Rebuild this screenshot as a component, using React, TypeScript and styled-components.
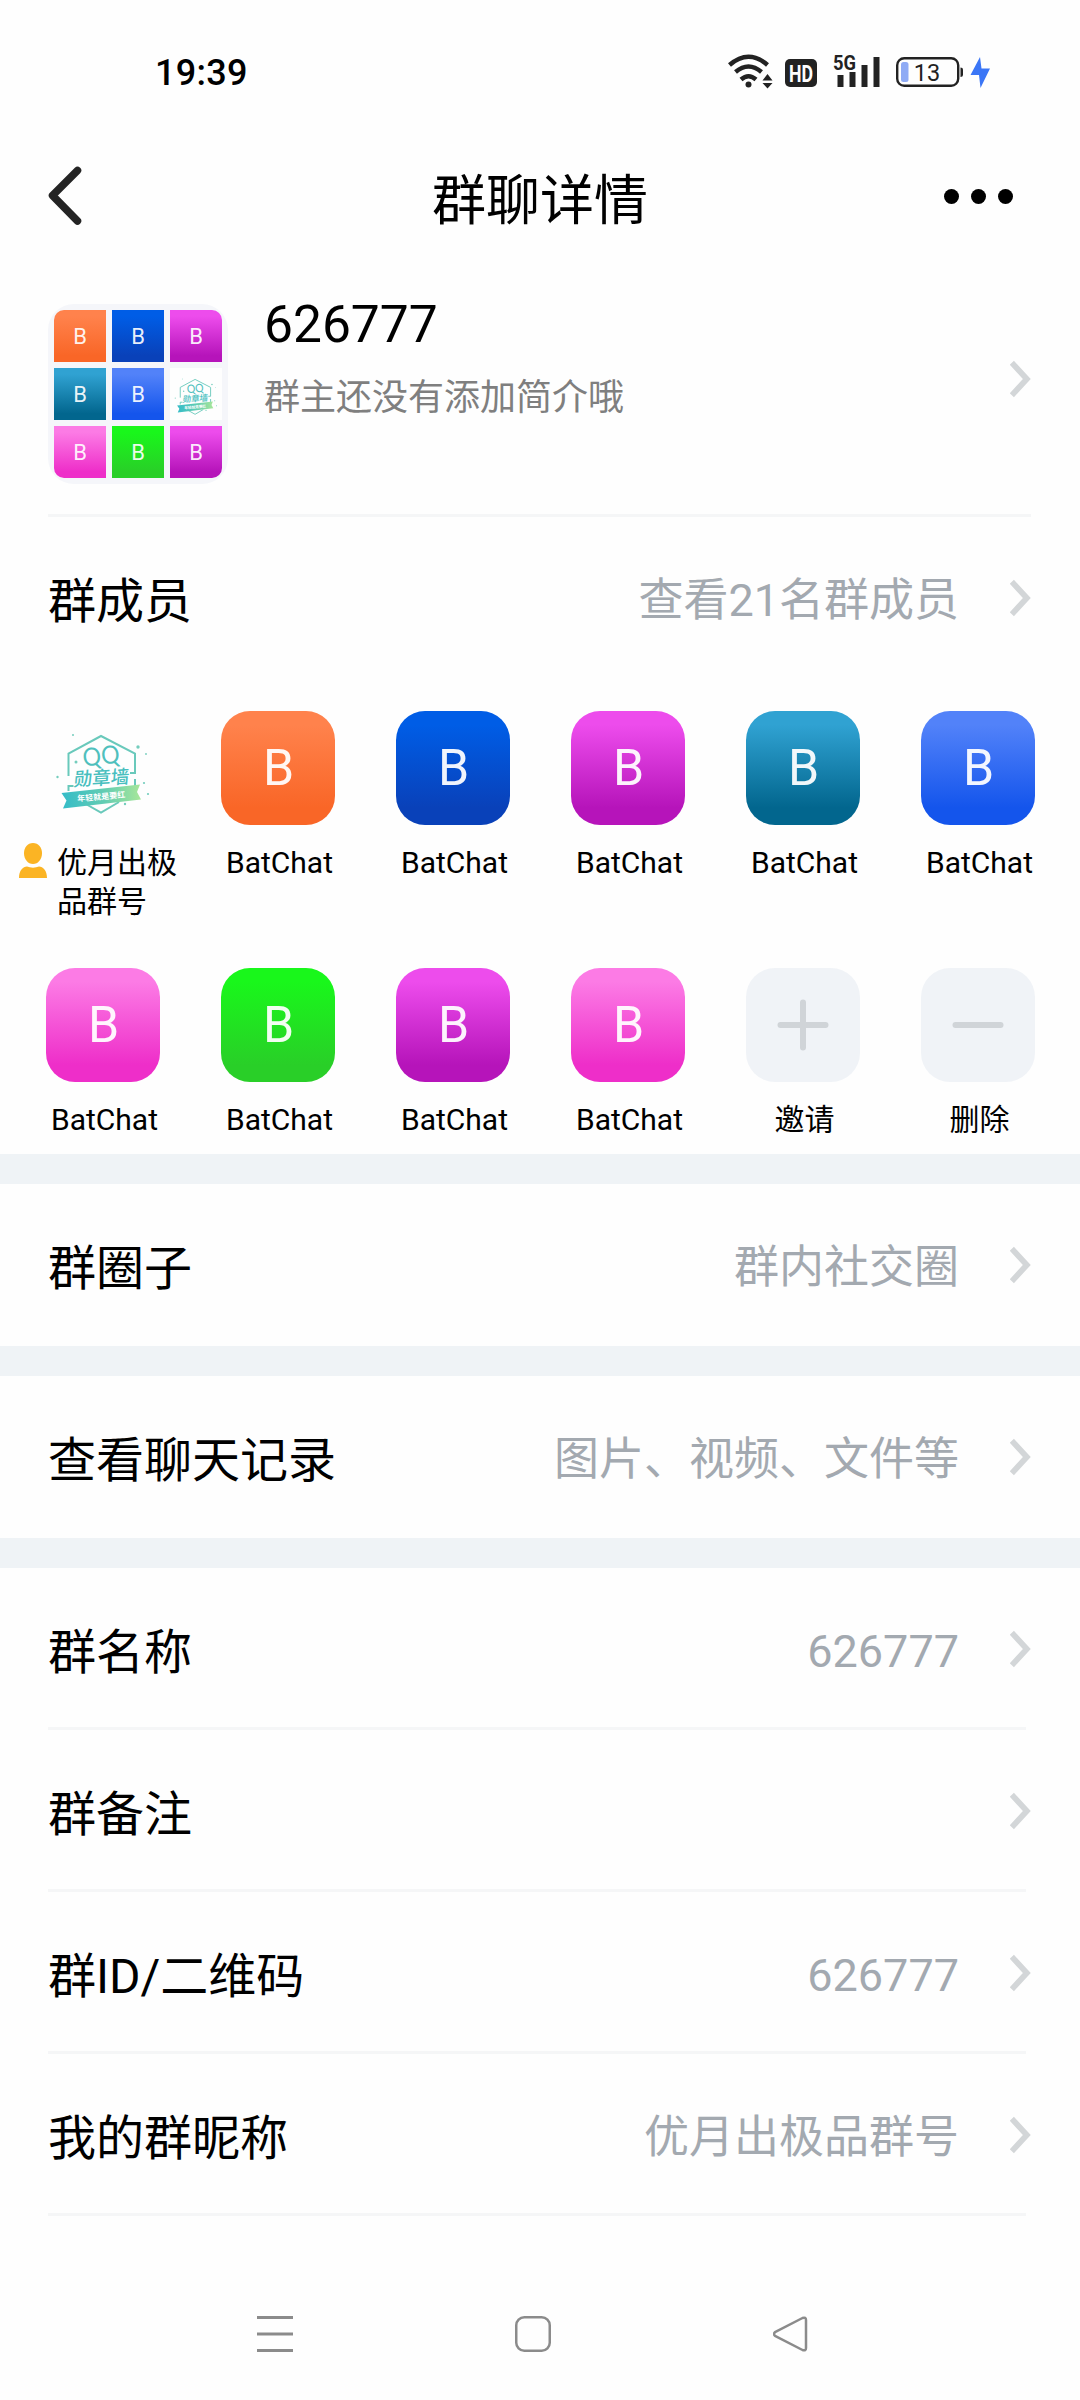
import React from "react";
import styled, { createGlobalStyle } from "styled-components";

const Global = createGlobalStyle`
  * { box-sizing: border-box; }
  body {
    margin: 0;
    background: #fefefe;
    font-family: Roboto, "Noto Sans CJK SC", sans-serif;
    color: #000;
  }
  svg { display: block; flex: none; }
`;

const Screen = styled.div`
  width: 1080px;
  height: 2400px;
  display: flex;
  flex-direction: column;
  overflow: hidden;
  background: #fefefe;
`;

const StatusBar = styled.header`
  display: flex;
  align-items: center;
  justify-content: space-between;
  height: 144px;
  padding: 0 88px 0 155px;
`;

const Clock = styled.span`
  padding-top: 2px;
  font-size: 36px;
  font-weight: 500;
  line-height: 44px;
  letter-spacing: 0.3px;
`;

const TitleBar = styled.nav`
  display: grid;
  grid-template-columns: 60px 1fr 60px;
  align-items: center;
  height: 104px;
  padding: 0 48px;
`;

const Title = styled.h1`
  margin: 0;
  padding-top: 11px;
  text-align: center;
  font-size: 54px;
  font-weight: 400;
  line-height: 64px;
`;

const Dots = styled.div`
  display: flex;
  justify-content: flex-end;
  gap: 12px;
  padding-right: 19px;
`;

const Dot = styled.i`
  width: 15px;
  height: 15px;
  flex: none;
  border-radius: 50%;
  background: #000;
`;

const GroupCard = styled.section`
  display: flex;
  align-items: flex-start;
  height: 269px;
  margin: 0 49px 0 48px;
  padding-top: 56px;
  border-bottom: 3px solid #f5f6f7;
`;

const Mosaic = styled.div`
  display: grid;
  grid-template-columns: repeat(3, 52px);
  grid-template-rows: repeat(3, 52px);
  gap: 6px;
  width: 180px;
  height: 180px;
  padding: 6px;
  border-radius: 26px;
  background: #f5f6fa;
  flex: none;
`;

const Tile = styled.div<{ $from: string; $to: string; $corner?: string }>`
  display: flex;
  align-items: center;
  justify-content: center;
  border-radius: ${(p) => p.$corner ?? "0"};
  background: linear-gradient(${(p) => p.$from} 12%, ${(p) => p.$to} 88%);
  color: rgba(255, 255, 255, 0.92);
  font-size: 22px;
`;

const GroupText = styled.div`
  flex: 1;
  padding-left: 36px;
`;

const GroupName = styled.div`
  margin-top: -10px;
  font-size: 51.5px;
  line-height: 62px;
`;

const GroupIntro = styled.div`
  margin-top: 18px;
  font-size: 36px;
  line-height: 48px;
  color: #7f7f7f;
`;

const GroupArrow = styled.div`
  padding: 56px 0 0;
`;

const Row = styled.div<{ $line?: boolean }>`
  display: flex;
  align-items: center;
  height: 162px;
  padding: 0 49px 0 48px;
  background: linear-gradient(#f5f6f7, #f5f6f7) 48px 100% / 978px
    ${(p) => (p.$line ? "3px" : "0")} no-repeat;
`;

const RowLabel = styled.span`
  flex: 1;
  padding-top: 8px;
  font-size: 48px;
  line-height: 60px;
`;

const RowValue = styled.span`
  margin-right: 51px;
  padding-top: 5px;
  font-size: 45px;
  line-height: 56px;
  color: #a3a9b0;
`;

const MemberGrid = styled.section`
  display: grid;
  grid-template-columns: repeat(6, 175px);
  grid-template-rows: 257px 186px;
  padding: 32px 0 0 15px;
`;

const Member = styled.div`
  display: flex;
  flex-direction: column;
  align-items: center;
`;

const Avatar = styled.div<{ $from: string; $to: string; $letter?: boolean }>`
  display: flex;
  align-items: center;
  justify-content: center;
  width: 114px;
  height: 114px;
  border-radius: 29px;
  background: linear-gradient(${(p) => p.$from} 12%, ${(p) => p.$to} 85%);
  color: rgba(255, 255, 255, 0.94);
  font-size: 50px;
  line-height: 114px;
  padding-left: ${(p) => (p.$letter ? "2px" : "0")};
`;

const MemberName = styled.div`
  padding: 18px 0 0 4px;
  font-size: 30px;
  line-height: 39px;
  text-align: center;
`;

const OwnerName = styled.div`
  display: flex;
  align-items: flex-start;
  gap: 10px;
  width: 175px;
  padding: 18px 0 0 4px;
  font-size: 30px;
  line-height: 39px;
`;

const Band = styled.div`
  height: 30px;
  flex: none;
  background: #eff3f6;
`;

const SystemNav = styled.footer`
  display: flex;
  align-items: center;
  gap: 222px;
  height: 184px;
  padding: 52px 0 0 257px;
`;

const StatusIcons = () => (
  <svg width="264" height="40" viewBox="728 52 264 40">
    <g fill="none" stroke="#222" strokeWidth="4.500">
      <path d="M729.500 65Q748.500 48.500 767.500 65" />
      <path d="M735.500 72Q748.500 61 761.500 72" />
      <path d="M741 79.500Q748.500 73 756 79.500" />
    </g>
    <circle cx="748.500" cy="84.500" r="3" fill="#222" />
    <path d="M762.500 80.500l5-6.500 5 6.500zM762.500 83l5 5.500 5-5.500z" fill="#222" />
    <rect x="785" y="59" width="32" height="28" rx="5" fill="#222" />
    <text x="801" y="81.500" fontSize="23.500" fontWeight="700" fill="#fefefe" textAnchor="middle" textLength="24" lengthAdjust="spacingAndGlyphs">HD</text>
    <text x="833" y="70" fontSize="21" fontWeight="700" fill="#222" textLength="23" lengthAdjust="spacingAndGlyphs">5G</text>
    <path d="M837.500 75h6v12h-6zM849.500 72h6v15h-6zM861.500 65h6v22h-6zM873.500 57h6v30h-6z" fill="#222" />
    <rect x="897.200" y="58.200" width="61" height="27.600" rx="7" fill="none" stroke="#222" strokeWidth="2.400" />
    <path d="M960.500 67.500q2.500 0 2.500 2v5.500q0 2-2.500 2z" fill="#222" />
    <rect x="901" y="62" width="7.500" height="20" rx="2.500" fill="#8fabf5" />
    <text x="927" y="81" fontSize="23.500" fill="#222" textAnchor="middle">13</text>
    <path d="M980 57L970.500 75h8.500l1.500 13 9.500-19.500h-8.500z" fill="#3b76f6" />
  </svg>
);

const BackIcon = () => (
  <svg width="34" height="60" viewBox="0 0 34 60" fill="none" stroke="#242424" strokeWidth="7.500" strokeLinecap="round" strokeLinejoin="round">
    <path d="M29.500 4.500L4.500 29.500l25 25.500" />
  </svg>
);

const Arrow = () => (
  <svg width="21" height="38" viewBox="0 0 21 38" fill="none" stroke="#d3d6d8" strokeWidth="5.800">
    <path d="M1.800 2.800L16.800 19 1.800 35.200" />
  </svg>
);

const OwnerIcon = () => (
  <svg width="28" height="35" viewBox="0 0 28 35" fill="#fbb424">
    <path d="M14 0c5.500 0 9 4.500 9 10.200C23 16 19.200 21 14 21S5 16 5 10.200C5 4.500 8.500 0 14 0z" />
    <path d="M0 35c0-7.500 4-11.500 8-11.500 3.500 1.500 8.500 1.500 12 0 4 0 8 4 8 11.500z" />
  </svg>
);

const Medal = ({ size }: { size: number }) => {
  const id = `medal${size}`;
  return (
    <svg width={size} height={size} viewBox="0 0 114 114">
      <defs>
        <linearGradient id={id} gradientUnits="userSpaceOnUse" x1="16" y1="0" x2="94" y2="0">
          <stop offset="0" stopColor="#35bcc8" />
          <stop offset="0.55" stopColor="#63cdb2" />
          <stop offset="1" stopColor="#a6e69a" />
        </linearGradient>
      </defs>
      <g fill="none" stroke="#69c9bb" strokeWidth="2">
        <path d="M22.500 65V42.500L55 25l34 17.500V62h-5" />
        <path d="M22.500 80v-5h5M89 68v8M38 92l17 9.500L73 91" />
      </g>
      <g fontFamily='"Noto Sans CJK SC", sans-serif' textAnchor="middle">
        <text x="0" y="0" transform="translate(56 53.500) rotate(-6)" fontSize="25" fontFamily='Lato, sans-serif' fill="#4fc0bd" textLength="37" lengthAdjust="spacingAndGlyphs">QQ</text>
        <text x="0" y="0" transform="translate(55 73.500) rotate(-3) skewX(-8)" fontSize="18.500" fontWeight="500" fill="#48bfbf">勋章墙</text>
        <path d="M15.500 82L94 73.500l-3 7.500 4 7.500L17 97.500l3.500-8z" fill={`url(#${id})`} />
        <text x="0" y="0" transform="translate(55.500 88.500) rotate(-5)" fontSize="8" fontWeight="700" fill="#fff">年轻就是要红</text>
      </g>
      <g fill="#74cdbd">
        <circle cx="92" cy="36" r="1.700" />
        <circle cx="30" cy="51" r="1.500" />
        <circle cx="27" cy="24" r="1" />
        <circle cx="100" cy="43" r="0.900" />
        <circle cx="11.500" cy="66" r="1.200" />
        <circle cx="98" cy="72" r="1.100" />
        <circle cx="102" cy="83" r="1.100" />
        <circle cx="79" cy="93" r="1.200" />
      </g>
    </svg>
  );
};

const Plus = ({ vertical }: { vertical?: boolean }) => (
  <svg width="52" height="52" viewBox="0 0 52 52" stroke="#d0d4d8" strokeWidth="6" strokeLinecap="round">
    <path d={vertical ? "M3.500 26h45M26 3.500v45" : "M3.500 26h45"} />
  </svg>
);

type Tone = "orange" | "navy" | "violet" | "teal" | "blue" | "pink" | "green";

const tones: Record<Tone, [string, string]> = {
  orange: ["#ff824c", "#f96627"],
  navy: ["#005de6", "#0941b9"],
  violet: ["#ed4cec", "#b614ba"],
  teal: ["#30a2d2", "#02668e"],
  blue: ["#5282f9", "#1455ec"],
  pink: ["#fc7be5", "#ee2ec9"],
  green: ["#19f71b", "#29cf28"],
};

const mosaic: (Tone | null)[] = ["orange", "navy", "violet", "teal", "blue", null, "pink", "green", "violet"];
const corners: Record<number, string> = {
  0: "10px 0 0 0",
  2: "0 10px 0 0",
  6: "0 0 0 10px",
  8: "0 0 10px 0",
};
const members: Tone[] = ["orange", "navy", "violet", "teal", "blue", "pink", "green", "violet", "pink"];

const details = [
  { label: "群名称", value: "626777" },
  { label: "群备注", value: "" },
  { label: "群ID/二维码", value: "626777" },
  { label: "我的群昵称", value: "优月出极品群号" },
];

const InfoRow = ({ label, value, line }: { label: string; value: string; line?: boolean }) => (
  <Row $line={line}>
    <RowLabel>{label}</RowLabel>
    <RowValue>{value}</RowValue>
    <Arrow />
  </Row>
);

export default function App() {
  return (
    <Screen lang="zh-CN">
      <Global />
      <StatusBar>
        <Clock>19:39</Clock>
        <StatusIcons />
      </StatusBar>
      <TitleBar>
        <BackIcon />
        <Title>群聊详情</Title>
        <Dots>
          <Dot />
          <Dot />
          <Dot />
        </Dots>
      </TitleBar>

      <GroupCard>
        <Mosaic>
          {mosaic.map((tone, i) =>
            tone ? (
              <Tile key={i} $from={tones[tone][0]} $to={tones[tone][1]} $corner={corners[i]}>
                B
              </Tile>
            ) : (
              <Tile key={i} $from="#fefefe" $to="#fefefe">
                <Medal size={52} />
              </Tile>
            )
          )}
        </Mosaic>
        <GroupText>
          <GroupName>626777</GroupName>
          <GroupIntro>群主还没有添加简介哦</GroupIntro>
        </GroupText>
        <GroupArrow>
          <Arrow />
        </GroupArrow>
      </GroupCard>

      <InfoRow label="群成员" value="查看21名群成员" />
      <MemberGrid>
        <Member>
          <Avatar $from="#fefefe" $to="#fefefe">
            <Medal size={114} />
          </Avatar>
          <OwnerName>
            <OwnerIcon />
            <span>
              优月出极
              <br />
              品群号
            </span>
          </OwnerName>
        </Member>
        {members.map((tone, i) => (
          <Member key={i}>
            <Avatar $letter $from={tones[tone][0]} $to={tones[tone][1]}>
              B
            </Avatar>
            <MemberName>BatChat</MemberName>
          </Member>
        ))}
        <Member>
          <Avatar $from="#f0f3f7" $to="#f0f3f7">
            <Plus vertical />
          </Avatar>
          <MemberName>邀请</MemberName>
        </Member>
        <Member>
          <Avatar $from="#f0f3f7" $to="#f0f3f7">
            <Plus />
          </Avatar>
          <MemberName>删除</MemberName>
        </Member>
      </MemberGrid>

      <Band />
      <InfoRow label="群圈子" value="群内社交圈" />
      <Band />
      <InfoRow label="查看聊天记录" value="图片、视频、文件等" />
      <Band />
      {details.map((d) => (
        <InfoRow key={d.label} label={d.label} value={d.value} line />
      ))}

      <SystemNav>
        <svg width="36" height="36" viewBox="0 0 36 36" stroke="#8b8b8b" strokeWidth="3">
          <path d="M0 1.500h36M0 18h36M0 34.500h36" />
        </svg>
        <svg width="36" height="36" viewBox="0 0 36 36" fill="none" stroke="#8b8b8b" strokeWidth="2.500">
          <rect x="1.250" y="1.250" width="33.500" height="33.500" rx="8" />
        </svg>
        <svg width="36" height="36" viewBox="0 0 36 36" fill="none" stroke="#8b8b8b" strokeWidth="2.500" strokeLinejoin="round">
          <path d="M2 16.200L29.500 2Q33 .8 33 4v28q0 3.200-3.500 2L2 19.800q-2-1.800 0-3.600z" />
        </svg>
      </SystemNav>
    </Screen>
  );
}
